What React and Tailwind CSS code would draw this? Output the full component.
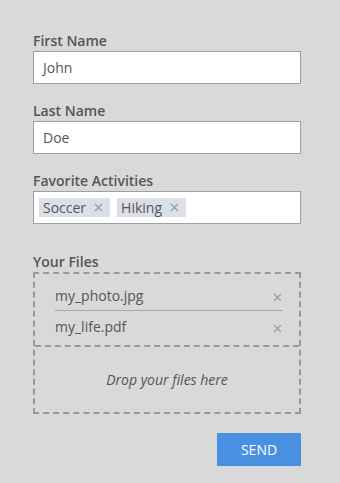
const Label = ({ children }) => (
  <div className="text-[14px] leading-[18px] font-semibold text-[#555] mb-[1px]">{children}</div>
);

const Cross = ({ className = "" }) => (
  <svg width="9" height="9" viewBox="0 0 9 9" className={className}>
    <path d="M1 1L8 8M8 1L1 8" stroke="#999" strokeWidth="1.1" />
  </svg>
);

const Tag = ({ text }) => (
  <div className="flex items-center h-[19px] bg-[#dbe0e8] pl-[4px] pr-[7px] gap-[8px]">
    <span>{text}</span>
    <Cross />
  </div>
);

export default function App() {
  const files = ["my_photo.jpg", "my_life.pdf"];
  return (
    <div
      className="min-h-screen bg-[#d9d9d9] pl-[33px] pr-[39px] pt-[32px] text-[#555] text-[14px]"
      style={{ fontFamily: "'Open Sans', Lato, sans-serif" }}
    >
      <div className="flex flex-col gap-[18px]">
        <div>
          <Label>First Name</Label>
          <div className="h-[33px] bg-white border border-[#a0a0a0] flex items-center px-[9px]">John</div>
        </div>
        <div>
          <Label>Last Name</Label>
          <div className="h-[33px] bg-white border border-[#a0a0a0] flex items-center px-[9px]">Doe</div>
        </div>
        <div>
          <Label>Favorite Activities</Label>
          <div className="h-[33px] bg-white border border-[#a0a0a0] flex items-center px-[5px] gap-[7px]">
            <Tag text="Soccer" />
            <Tag text="Hiking" />
          </div>
        </div>
      </div>

      <div className="mt-[29px]">
        <Label>Your Files</Label>
        <div className="border-2 border-dashed border-[#999]">
          <div className="pl-[20px] pr-[16px] pt-[7px] pb-[4px]">
            {files.map((f, i) => (
              <div
                key={f}
                className={`h-[30px] flex items-center justify-between ${i === 0 ? "border-b border-[#aaa]" : ""}`}
              >
                <span>{f}</span>
                <Cross className="mr-[1px] mt-[4px]" />
              </div>
            ))}
          </div>
          <div className="border-t-2 border-dashed border-[#999] h-[67px] flex items-center justify-center italic">
            Drop your files here
          </div>
        </div>
      </div>

      <div className="flex justify-end mt-[19px]">
        <button className="w-[84px] h-[33px] bg-[#4a90e2] text-white text-[14px]">SEND</button>
      </div>
    </div>
  );
}
